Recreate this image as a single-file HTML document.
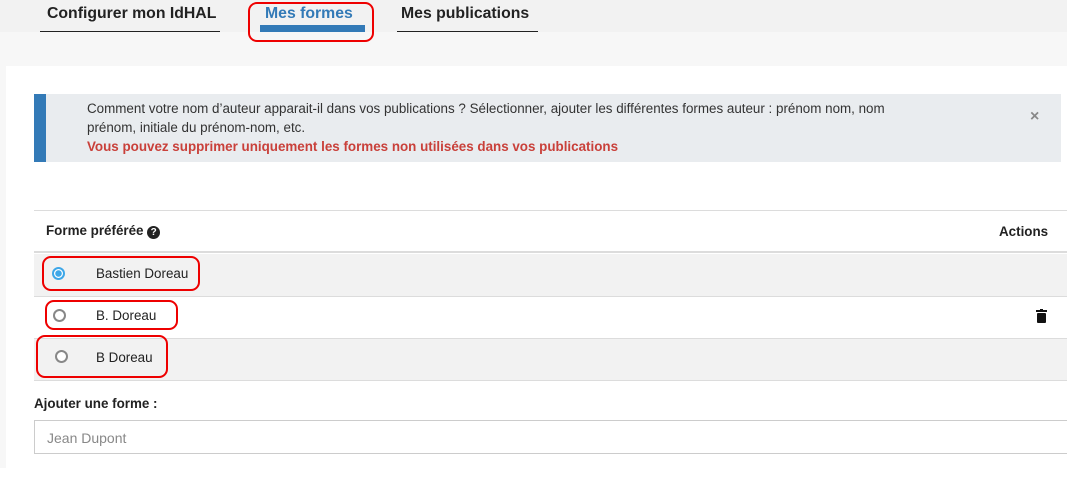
<!DOCTYPE html>
<html><head><meta charset="utf-8"><style>
*{box-sizing:border-box;margin:0;padding:0}
body{width:1067px;height:488px;background:#fff;font-family:"Liberation Sans",sans-serif;color:#222;position:relative;overflow:hidden}
.abs{position:absolute}
.top{left:0;top:0;width:1067px;height:32px;background:#f2f2f2}
.band{left:6px;top:32px;width:1061px;height:34px;background:#f7f7f7}
.leftband{left:0;top:32px;width:6px;height:436px;background:#f7f7f7}
.tab{font-weight:bold;font-size:15.8px;top:5px}
.red{border:2px solid #e00;border-radius:9px}
.alert{left:34px;top:94px;width:1027px;height:68px;background:#e9ecef;border-left:12px solid #337ab7;font-size:13.4px;line-height:19px;padding:5px 0 0 41px;color:#333}
.row{left:34px;width:1033px;height:42px;border-top:1px solid #dcdcdc}
.radio{width:13px;height:13px;border-radius:50%;border:2px solid #888;background:#fff}
.nm{font-size:13.4px}
</style></head><body>
<div class="abs top"></div>
<div class="abs band"></div>
<div class="abs leftband"></div>
<div class="abs tab" style="left:47px">Configurer mon IdHAL</div>
<div class="abs" style="left:40px;top:31px;width:180px;height:1px;background:#222"></div>
<div class="abs tab" style="left:265px;color:#337ab7">Mes formes</div>
<div class="abs" style="left:260px;top:25px;width:105px;height:7px;background:#337ab7"></div>
<div class="abs red" style="left:248px;top:2px;width:126px;height:40px"></div>
<div class="abs tab" style="left:401px">Mes publications</div>
<div class="abs" style="left:397px;top:31px;width:141px;height:1px;background:#222"></div>

<div class="abs alert">Comment votre nom d’auteur apparait-il dans vos publications ? Sélectionner, ajouter les différentes formes auteur : prénom nom, nom<br>prénom, initiale du prénom-nom, etc.<br><b style="color:#c9403a">Vous pouvez supprimer uniquement les formes non utilisées dans vos publications</b></div>
<div class="abs" style="left:1030px;top:108px;font-size:16px;color:#888;font-weight:bold">×</div>

<div class="abs row" style="top:210px;height:43px;border-bottom:2px solid #dcdcdc"></div>
<div class="abs" style="left:46px;top:223px;font-size:13.4px;font-weight:bold">Forme préférée <span style="display:inline-block;width:13px;height:13px;border-radius:50%;background:#222;color:#fff;font-size:10px;text-align:center;line-height:13px">?</span></div>
<div class="abs" style="left:999px;top:224px;font-size:13.4px;font-weight:bold">Actions</div>

<div class="abs row" style="top:254px;background:#f2f2f2;border-top:none"></div>
<div class="abs row" style="top:296px"></div>
<div class="abs row" style="top:338px;background:#f2f2f2"></div>
<div class="abs" style="left:34px;top:380px;width:1033px;height:1px;background:#dcdcdc"></div>

<div class="abs radio" style="left:52px;top:267px;border-color:#3ea7e8;background:radial-gradient(circle,#3ea7e8 3px,#fff 3.5px)"></div>
<div class="abs nm" style="left:96px;top:266px">Bastien Doreau</div>
<div class="abs red" style="left:42px;top:256px;width:158px;height:35px"></div>
<div class="abs radio" style="left:53px;top:309px"></div>
<div class="abs nm" style="left:96px;top:308px">B. Doreau</div>
<div class="abs red" style="left:45px;top:300px;width:133px;height:30px"></div>
<div class="abs radio" style="left:55px;top:350px"></div>
<div class="abs nm" style="left:96px;top:350px">B Doreau</div>
<div class="abs red" style="left:36px;top:335px;width:132px;height:43px"></div>

<svg class="abs" style="left:1036px;top:309px" width="11" height="14" viewBox="0 0 11 14"><rect x="0" y="1" width="11" height="2" fill="#111"/><rect x="4" y="0" width="3" height="2" fill="#111"/><rect x="1" y="4" width="9" height="10" rx="1" fill="#111"/></svg>

<div class="abs" style="left:34px;top:396px;font-size:13.4px;font-weight:bold">Ajouter une forme :</div>
<div class="abs" style="left:34px;top:420px;width:1040px;height:34px;border:1px solid #ccc;font-size:14px;color:#888;padding:9px 0 0 12px">Jean Dupont</div>
<div class="abs" style="left:0;top:468px;width:1067px;height:20px;background:#fff"></div>
</body></html>
